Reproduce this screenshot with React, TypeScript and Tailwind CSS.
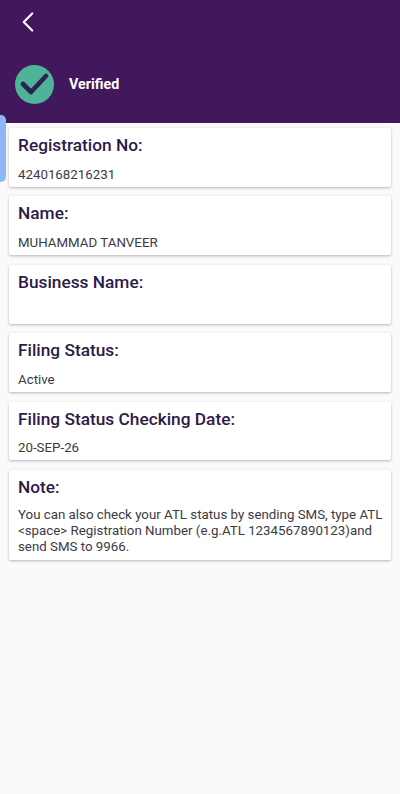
import { ChevronLeft } from 'lucide-react'

const rows = [
  { label: 'Registration No:', value: '4240168216231' },
  { label: 'Name:', value: 'MUHAMMAD TANVEER' },
  { label: 'Business Name:', value: '' },
  { label: 'Filing Status:', value: 'Active' },
  { label: 'Filing Status Checking Date:', value: '20-SEP-26' },
]

function Card({ label, children }: { label: string; children: React.ReactNode }) {
  return (
    <div className="bg-white rounded-[2px] shadow-[0_1px_3px_rgba(0,0,0,0.28)] pl-[9px] pr-[8px] pt-[6px]">
      <h2 className="text-[17.3px] leading-[22px] font-medium text-[#2d1a4a]">{label}</h2>
      {children}
    </div>
  )
}

export default function App() {
  return (
    <div className="relative w-[400px] h-[794px] bg-[#fafafa] overflow-hidden font-['Roboto',sans-serif]">
      <header className="h-[123px] bg-[#41185c] pl-[15px] flex flex-col">
        <div className="pt-[5px] h-[65px]">
          <ChevronLeft className="w-[34px] h-[34px] -ml-[4px] text-white" strokeWidth={1.5} />
        </div>
        <div className="flex items-center gap-[15px]">
          <div className="w-[39px] h-[39px] rounded-full bg-[#4fb39a] flex items-center justify-center">
            <svg viewBox="0 0 39 39" className="w-[39px] h-[39px]" fill="none">
              <path d="M8 19 L16 27 L31 11" stroke="#2b2250" strokeWidth="4.6" strokeLinecap="round" strokeLinejoin="round" />
            </svg>
          </div>
          <span className="text-white text-[14.3px] font-bold">Verified</span>
        </div>
      </header>

      <div className="absolute left-0 top-[115px] w-[6px] h-[67px] bg-[#8db8f5] rounded-r-[5px]" />

      <main className="relative px-[9px] pt-[5px] flex flex-col gap-[9.5px]">
        {rows.map(r => (
          <Card key={r.label} label={r.label}>
            <p className="mt-[9.5px] h-[21.4px] text-[13.3px] leading-[18px] text-[#3c3a44]">{r.value}</p>
          </Card>
        ))}
        <Card label="Note:">
          <p className="mt-[9px] pb-[5px] text-[13.3px] leading-[16px] text-[#3c3a44]">
            You can also check your ATL status by sending SMS, type ATL &lt;space&gt; Registration Number (e.g.ATL 1234567890123)and send SMS to 9966.
          </p>
        </Card>
      </main>
    </div>
  )
}
